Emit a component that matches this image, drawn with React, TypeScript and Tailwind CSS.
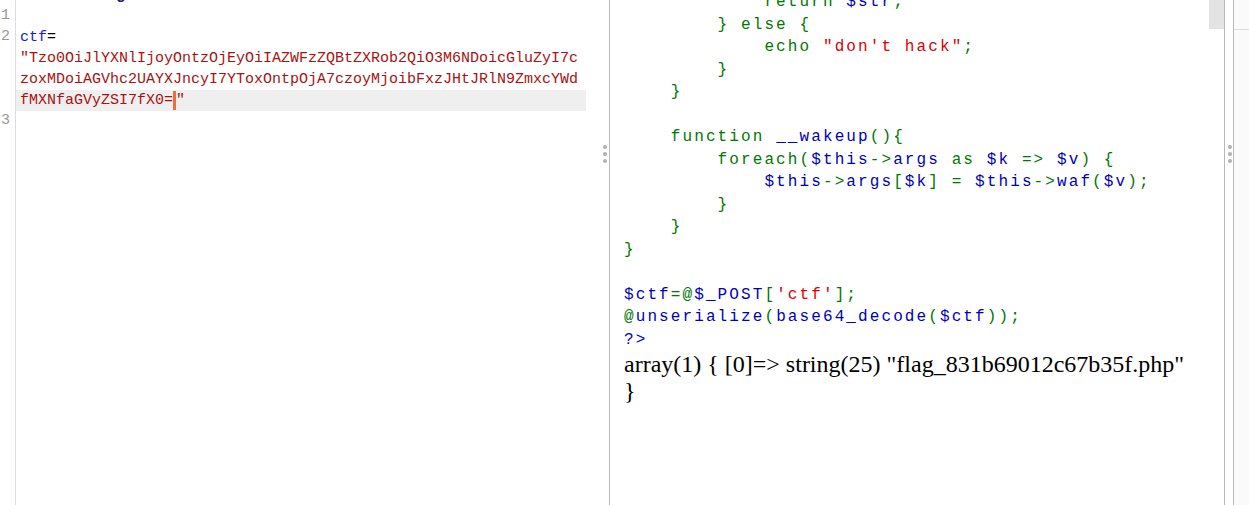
import React from "react";

type Seg = [string, string];

const G = "#007700";
const B = "#0000BB";
const R = "#DD0000";

const phpLines: Seg[][] = [
  [["            return ", G], ["$str", B], [";", G]],
  [["        } else {", G]],
  [["            echo ", G], ['"don\'t hack"', R], [";", G]],
  [["        }", G]],
  [["    }", G]],
  [],
  [["    function ", G], ["__wakeup", B], ["(){", G]],
  [
    ["        foreach(", G],
    ["$this", B],
    ["->", G],
    ["args", B],
    [" as ", G],
    ["$k", B],
    [" => ", G],
    ["$v", B],
    [") {", G],
  ],
  [
    ["            ", G],
    ["$this", B],
    ["->", G],
    ["args", B],
    ["[", G],
    ["$k", B],
    ["] = ", G],
    ["$this", B],
    ["->", G],
    ["waf", B],
    ["(", G],
    ["$v", B],
    [");", G],
  ],
  [["        }", G]],
  [["    }", G]],
  [["}", G]],
  [],
  [["$ctf", B], ["=@", G], ["$_POST", B], ["[", G], ["'ctf'", R], ["];", G]],
  [
    ["@", G],
    ["unserialize", B],
    ["(", G],
    ["base64_decode", B],
    ["(", G],
    ["$ctf", B],
    ["));", G],
  ],
  [["?>", B]],
];

const payload = [
  '"Tzo0OiJlYXNlIjoyOntzOjEyOiIAZWFzZQBtZXRob2QiO3M6NDoicGluZyI7c',
  "zoxMDoiAGVhc2UAYXJncyI7YToxOntpOjA7czoyMjoibFxzJHtJRlN9ZmxcYWd",
];

function Dots() {
  return (
    <div className="flex flex-col gap-[3px]">
      <span className="block h-[4px] w-[4px] rounded-full bg-[#b0b0b0]" />
      <span className="block h-[4px] w-[4px] rounded-full bg-[#b0b0b0]" />
      <span className="block h-[4px] w-[4px] rounded-full bg-[#b0b0b0]" />
    </div>
  );
}

function Editor() {
  return (
    <div className="relative flex h-full w-[609px] shrink-0 font-['Liberation_Mono',monospace] text-[15px] leading-[21px]">
      <div className="flex h-full w-[16px] shrink-0 flex-col border-r border-[#dcdcdc] pt-[5px] pr-[5px] text-right text-[#999999]">
        <div>1</div>
        <div>2</div>
        <div>&nbsp;</div>
        <div>&nbsp;</div>
        <div>&nbsp;</div>
        <div>3</div>
      </div>
      <div className="relative flex-1 pr-[23px]">
        {/* tail of the line scrolled above the editor */}
        <div className="h-[3px] overflow-hidden">
          <div className="-mt-[15px] whitespace-pre pl-[4px] text-[16px] font-bold text-[#1b1f6e]">{"          g"}</div>
        </div>
        <div className="h-[3px]" />
        <div className="h-[21px]" />
        <div className="whitespace-pre pl-[4px]">
          <span className="text-[#1a1acc]">ctf</span>
          <span className="text-black">=</span>
        </div>
        {payload.map((p) => (
          <div key={p} className="whitespace-pre pl-[4px] text-[#aa1111]">
            {p}
          </div>
        ))}
        <div className="flex h-[21px] items-center whitespace-pre bg-[#efefef] pl-[4px] text-[#aa1111]">
          <span>fMXNfaGVyZSI7fX0=</span>
          <span className="h-[19px] w-[3px] bg-[#f26b3a]" />
          <span>"</span>
        </div>
      </div>
      <div className="absolute left-[603px] top-[145px]">
        <Dots />
      </div>
    </div>
  );
}

function Output() {
  return (
    <div className="h-full w-[599px] shrink-0 overflow-hidden pl-[14px]">
      <div className="-mt-[9px]">
        {phpLines.map((line, i) => (
          <div
            key={i}
            className="h-[22.5px] whitespace-pre font-['Liberation_Mono',monospace] text-[16px] leading-[22.5px] tracking-[2.1px]"
          >
            {line.map(([t, c], j) => (
              <span key={j} style={{ color: c }}>
                {t}
              </span>
            ))}
          </div>
        ))}
        <div className="whitespace-nowrap font-['Liberation_Serif',serif] text-[24px] leading-[27px] text-black">
          <div>array(1) {"{"} [0]=&gt; string(25) "flag_831b69012c67b35f.php"</div>
          <div>{"}"}</div>
        </div>
      </div>
    </div>
  );
}

export default function App() {
  return (
    <div className="flex h-[505px] w-[1249px] overflow-hidden bg-white">
      <Editor />
      <div className="h-full w-px shrink-0 bg-[#b8b8b8]" />
      <Output />
      <div className="h-full w-[15px] shrink-0">
        <div className="h-[29px] w-full bg-[#e3e3e3]" />
      </div>
      <div className="h-full w-px shrink-0 bg-[#b8b8b8]" />
      <div className="relative h-full w-[8px] shrink-0">
        <div className="absolute left-[3px] top-[145px]">
          <Dots />
        </div>
      </div>
      <div className="h-full w-px shrink-0 bg-[#b8b8b8]" />
      <div className="h-full flex-1 bg-[#fafafa]">
        <div className="h-[30px] border-b border-[#dddddd]" />
      </div>
    </div>
  );
}
